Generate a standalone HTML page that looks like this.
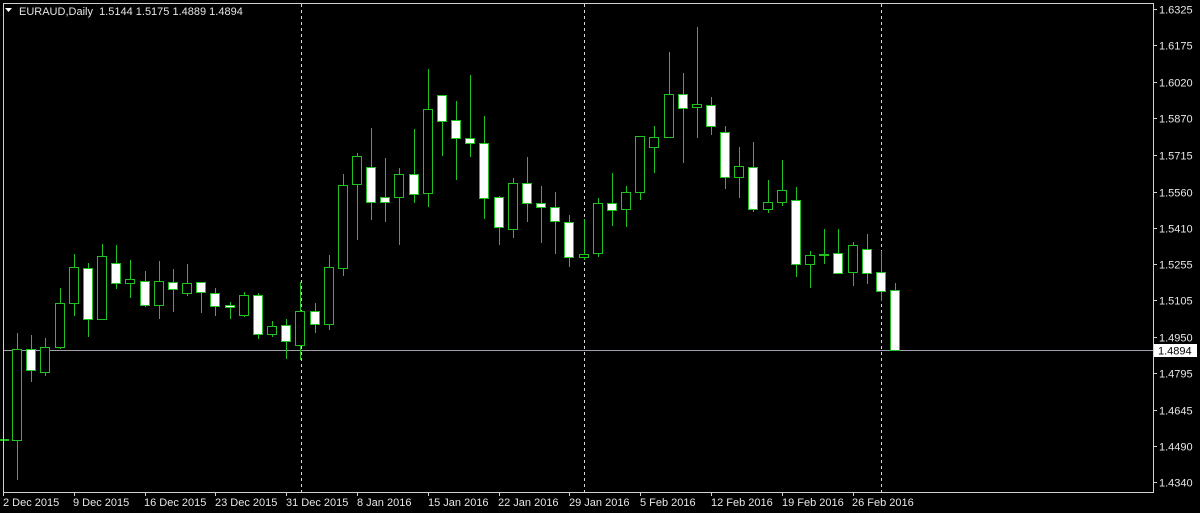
<!DOCTYPE html>
<html><head><meta charset="utf-8"><style>
html,body{margin:0;padding:0;background:#000;width:1200px;height:513px;overflow:hidden}
svg{display:block}
text{font-family:"Liberation Sans",sans-serif;font-size:11px;fill:#e6e6e6}
.h{fill:#000;stroke:#1fc21f}
.w{fill:#fff;stroke:#1fc21f}
</style></head><body>
<svg width="1200" height="513" viewBox="0 0 1200 513">
<rect x="0" y="0" width="1200" height="513" fill="#000"/>
<!-- grid dashed -->
<g stroke="#d8d8d8" stroke-dasharray="3,3" stroke-width="1">
<line x1="301.5" y1="4" x2="301.5" y2="492"/>
<line x1="584.5" y1="4" x2="584.5" y2="492"/>
<line x1="881.5" y1="4" x2="881.5" y2="492"/>
</g>
<!-- current price line -->
<line x1="3" y1="350.5" x2="1153" y2="350.5" stroke="#a0a0a8" stroke-width="1"/>
<!-- wicks -->
<path fill="none" stroke="#1fc21f" stroke-width="1" d="M3.5 432V467 M17.5 333V480 M31.5 335V382 M45.5 338V376 M60.5 288V349 M74.5 254V316 M88.5 263V337 M102.5 244V319 M116.5 245V289 M130.5 260V298 M145.5 271V307 M159.5 261V319 M173.5 269V312 M187.5 264V296 M201.5 282V313 M215.5 288V316 M230.5 302V319 M244.5 292V317 M258.5 293V339 M272.5 321V337 M286.5 319V359 M300.5 282V360 M315.5 303V333 M329.5 255V330 M343.5 174V276 M357.5 153V240 M371.5 128V220 M385.5 158V222 M399.5 168V245 M414.5 129V203 M428.5 69V207 M442.5 95V156 M456.5 101V180 M470.5 75V157 M484.5 116V219 M499.5 196V245 M513.5 178V238 M527.5 157V222 M541.5 186V243 M555.5 192V254 M569.5 215V267 M584.5 219V260 M598.5 198V257 M612.5 173V226 M626.5 186V227 M640.5 136V200 M654.5 126V173 M669.5 52V137 M683.5 73V163 M697.5 27V138 M711.5 97V135 M725.5 126V189 M739.5 147V198 M753.5 142V212 M768.5 180V213 M782.5 160V206 M796.5 187V277 M810.5 251V288 M824.5 229V264 M838.5 229V273 M853.5 242V286 M867.5 234V284 M881.5 251V301 M895.5 283V350"/>
<!-- bodies -->
<g stroke-width="1">
<rect class="h" x="-0.5" y="439.5" width="9" height="1"/>
<rect class="h" x="12.5" y="349.5" width="9" height="91"/>
<rect class="w" x="26.5" y="349.5" width="9" height="21"/>
<rect class="h" x="40.5" y="347.5" width="9" height="25"/>
<rect class="h" x="55.5" y="303.5" width="9" height="44"/>
<rect class="h" x="69.5" y="267.5" width="9" height="36"/>
<rect class="w" x="83.5" y="268.5" width="9" height="51"/>
<rect class="h" x="97.5" y="256.5" width="9" height="63"/>
<rect class="w" x="111.5" y="263.5" width="9" height="20"/>
<rect class="h" x="125.5" y="279.5" width="9" height="4"/>
<rect class="w" x="140.5" y="281.5" width="9" height="24"/>
<rect class="h" x="154.5" y="281.5" width="9" height="24"/>
<rect class="w" x="168.5" y="282.5" width="9" height="7"/>
<rect class="h" x="182.5" y="283.5" width="9" height="10"/>
<rect class="w" x="196.5" y="282.5" width="9" height="10"/>
<rect class="w" x="210.5" y="293.5" width="9" height="13"/>
<rect class="w" x="225.5" y="305.5" width="9" height="2"/>
<rect class="h" x="239.5" y="295.5" width="9" height="20"/>
<rect class="w" x="253.5" y="295.5" width="9" height="39"/>
<rect class="h" x="267.5" y="326.5" width="9" height="8"/>
<rect class="w" x="281.5" y="325.5" width="9" height="16"/>
<rect class="h" x="295.5" y="311.5" width="9" height="34"/>
<rect class="w" x="310.5" y="311.5" width="9" height="13"/>
<rect class="h" x="324.5" y="267.5" width="9" height="57"/>
<rect class="h" x="338.5" y="185.5" width="9" height="83"/>
<rect class="h" x="352.5" y="156.5" width="9" height="28"/>
<rect class="w" x="366.5" y="167.5" width="9" height="35"/>
<rect class="w" x="380.5" y="197.5" width="9" height="5"/>
<rect class="h" x="394.5" y="174.5" width="9" height="23"/>
<rect class="w" x="409.5" y="174.5" width="9" height="20"/>
<rect class="h" x="423.5" y="109.5" width="9" height="84"/>
<rect class="w" x="437.5" y="95.5" width="9" height="26"/>
<rect class="w" x="451.5" y="120.5" width="9" height="18"/>
<rect class="w" x="465.5" y="138.5" width="9" height="5"/>
<rect class="w" x="479.5" y="143.5" width="9" height="55"/>
<rect class="w" x="494.5" y="197.5" width="9" height="30"/>
<rect class="h" x="508.5" y="183.5" width="9" height="46"/>
<rect class="w" x="522.5" y="183.5" width="9" height="20"/>
<rect class="w" x="536.5" y="203.5" width="9" height="4"/>
<rect class="w" x="550.5" y="207.5" width="9" height="14"/>
<rect class="w" x="564.5" y="222.5" width="9" height="35"/>
<rect class="h" x="579.5" y="254.5" width="9" height="3"/>
<rect class="h" x="593.5" y="203.5" width="9" height="50"/>
<rect class="w" x="607.5" y="203.5" width="9" height="7"/>
<rect class="h" x="621.5" y="192.5" width="9" height="17"/>
<rect class="h" x="635.5" y="136.5" width="9" height="56"/>
<rect class="h" x="649.5" y="137.5" width="9" height="10"/>
<rect class="h" x="664.5" y="94.5" width="9" height="43"/>
<rect class="w" x="678.5" y="94.5" width="9" height="14"/>
<rect class="h" x="692.5" y="104.5" width="9" height="3"/>
<rect class="w" x="706.5" y="105.5" width="9" height="21"/>
<rect class="w" x="720.5" y="132.5" width="9" height="45"/>
<rect class="h" x="734.5" y="166.5" width="9" height="11"/>
<rect class="w" x="748.5" y="167.5" width="9" height="42"/>
<rect class="h" x="763.5" y="202.5" width="9" height="7"/>
<rect class="h" x="777.5" y="190.5" width="9" height="12"/>
<rect class="w" x="791.5" y="200.5" width="9" height="64"/>
<rect class="h" x="805.5" y="255.5" width="9" height="9"/>
<rect class="h" x="819.5" y="254.5" width="9" height="1"/>
<rect class="w" x="833.5" y="253.5" width="9" height="20"/>
<rect class="h" x="848.5" y="245.5" width="9" height="27"/>
<rect class="w" x="862.5" y="249.5" width="9" height="24"/>
<rect class="w" x="876.5" y="272.5" width="9" height="19"/>
<rect class="w" x="890.5" y="290.5" width="9" height="60"/>
</g>
<!-- frame -->
<rect x="3.5" y="3.5" width="1150" height="489" fill="none" stroke="#d0d0d0" stroke-width="1"/>
<!-- right ticks -->
<path stroke="#d0d0d0" stroke-width="1" d="M1153 9.5h4M1153 45.5h4M1153 82.5h4M1153 118.5h4M1153 155.5h4M1153 192.5h4M1153 228.5h4M1153 264.5h4M1153 300.5h4M1153 337.5h4M1153 373.5h4M1153 410.5h4M1153 446.5h4M1153 482.5h4"/>
<!-- bottom ticks -->
<path stroke="#d0d0d0" stroke-width="1" d="M3.5 492v4M74.5 492v4M145.5 492v4M215.5 492v4M286.5 492v4M357.5 492v4M428.5 492v4M499.5 492v4M569.5 492v4M640.5 492v4M711.5 492v4M782.5 492v4M853.5 492v4"/>
<g>
<text x="1159" y="13.5">1.6325</text>
<text x="1159" y="49.5">1.6175</text>
<text x="1159" y="86.5">1.6020</text>
<text x="1159" y="122.5">1.5870</text>
<text x="1159" y="159.5">1.5715</text>
<text x="1159" y="196.5">1.5560</text>
<text x="1159" y="232.5">1.5410</text>
<text x="1159" y="268.5">1.5255</text>
<text x="1159" y="304.5">1.5105</text>
<text x="1159" y="341.5">1.4950</text>
<text x="1159" y="377.5">1.4795</text>
<text x="1159" y="414.5">1.4645</text>
<text x="1159" y="450.5">1.4490</text>
<text x="1159" y="486.5">1.4340</text>
</g>
<rect x="1154" y="344" width="43" height="13" fill="#fff"/>
<text x="1158" y="354.5" style="fill:#000">1.4894</text>
<g>
<text x="3" y="506">2 Dec 2015</text>
<text x="73" y="506">9 Dec 2015</text>
<text x="144" y="506">16 Dec 2015</text>
<text x="215" y="506">23 Dec 2015</text>
<text x="286" y="506">31 Dec 2015</text>
<text x="357" y="506">8 Jan 2016</text>
<text x="428" y="506">15 Jan 2016</text>
<text x="498" y="506">22 Jan 2016</text>
<text x="569" y="506">29 Jan 2016</text>
<text x="640" y="506">5 Feb 2016</text>
<text x="711" y="506">12 Feb 2016</text>
<text x="782" y="506">19 Feb 2016</text>
<text x="852" y="506">26 Feb 2016</text>
</g>
<path d="M5 8h7l-3.5 4z" fill="#fff"/>
<text x="19" y="15">EURAUD,Daily&#160; 1.5144 1.5175 1.4889 1.4894</text>
</svg>
</body></html>
